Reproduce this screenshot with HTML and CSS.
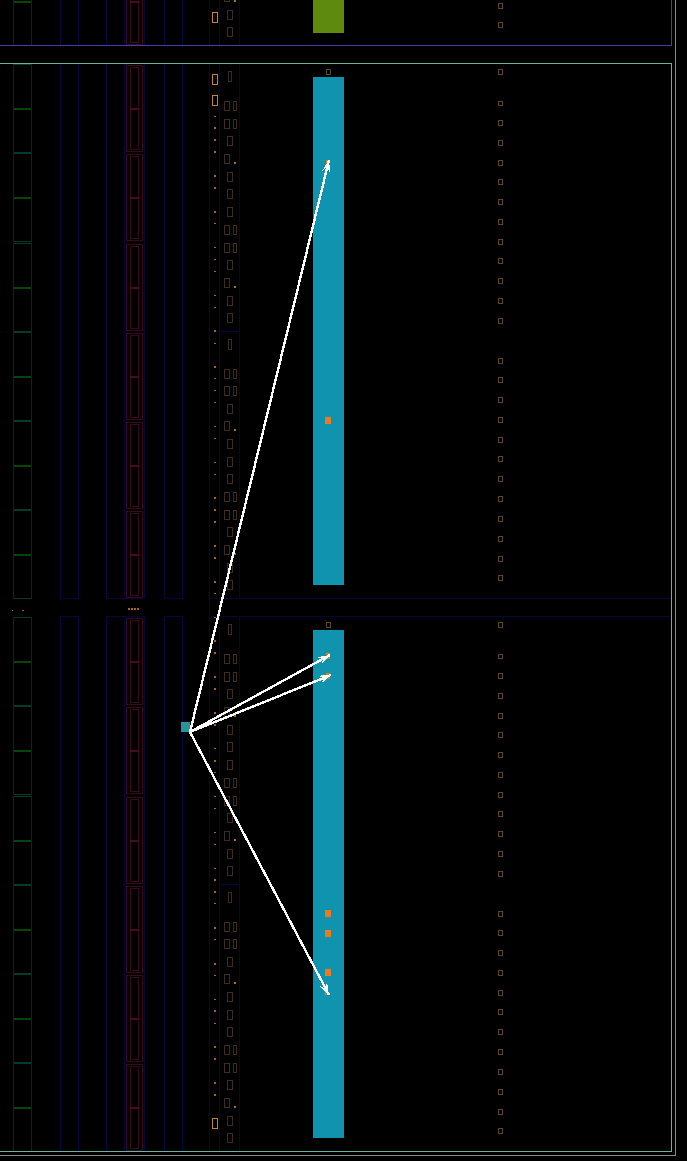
FILE: index.html
```html
<!DOCTYPE html>
<html lang="en">
<head>
<meta charset="utf-8">
<title>Floorplan</title>
<link rel="stylesheet" href="styles.css">
</head>
<body>
<svg class="plan" width="687" height="1161" viewBox="0 0 687 1161" xmlns="http://www.w3.org/2000/svg">
  <defs>
    <marker id="head" markerUnits="userSpaceOnUse" markerWidth="14" markerHeight="11" refX="13" refY="5.5" orient="auto">
      <path class="arrow-head" d="M13 5.5 L0 1 L6 5.5 L0 10 Z"/>
    </marker>

    <g id="pair">
      <rect class="green" x="13.5" y="0.5" width="18" height="88"/>
      <rect class="green-bar" x="14" y="44" width="17" height="2"/>
      <rect class="green-edge" x="14" y="88" width="17" height="1"/>
      <rect class="green-edge" x="14" y="0" width="17" height="1"/>
      <rect class="red" x="126.5" y="1.5" width="16" height="86"/>
      <rect class="red" x="130.5" y="3.5" width="8" height="82"/>
      <rect class="red-bar" x="130" y="44" width="9" height="2"/>
    </g>

    <rect id="sq" class="pad" x="498.5" y="0.5" width="4" height="5"/>
    <rect id="sq-short" class="pad" x="498.5" y="0.5" width="4" height="4"/>
    <rect id="dot" class="mark" x="214" y="0" width="2" height="2"/>
    <rect id="dash" class="mark" x="214" y="0" width="2" height="1"/>
    <rect id="big" class="big" x="212.5" y="0.5" width="5" height="10"/>

    <g id="c-pair">
      <rect class="chip" x="224.5" y="0.5" width="5" height="9"/>
      <rect class="chip" x="233.5" y="0.5" width="3" height="9"/>
    </g>
    <rect id="c-one" class="chip" x="227.5" y="0.5" width="5" height="9"/>
    <g id="c-left">
      <rect class="chip" x="224.5" y="0.5" width="5" height="9"/>
      <rect class="tick" x="234" y="8" width="2" height="2"/>
    </g>
    <rect id="c-narrow" class="chip" x="228.5" y="0.5" width="3" height="10"/>

    <g id="section">
      <rect class="col" x="60.5" y="63.5" width="18" height="535"/>
      <rect class="col" x="106.5" y="63.5" width="18" height="535"/>
      <rect class="col" x="124.5" y="63.5" width="20" height="535"/>
      <rect class="col" x="164.5" y="63.5" width="18" height="535"/>
      <rect class="col" x="209.5" y="63.5" width="10" height="535"/>
      <rect class="col" x="219.5" y="63.5" width="20" height="535"/>
      <rect class="col" x="219.5" y="331.5" width="20" height="267"/>

      <use href="#pair" y="64"/>
      <use href="#pair" y="153"/>
      <use href="#pair" y="243"/>
      <use href="#pair" y="332"/>
      <use href="#pair" y="421"/>
      <use href="#pair" y="510"/>

      <use href="#c-narrow" y="71"/>
      <use href="#c-pair" y="101"/>
      <use href="#c-pair" y="119"/>
      <use href="#c-one" y="136"/>
      <use href="#c-left" y="154"/>
      <use href="#c-one" y="172"/>
      <use href="#c-one" y="189"/>
      <use href="#c-one" y="207"/>
      <use href="#c-pair" y="225"/>
      <use href="#c-pair" y="243"/>
      <use href="#c-one" y="260"/>
      <use href="#c-left" y="278"/>
      <use href="#c-one" y="296"/>
      <use href="#c-one" y="313"/>
      <use href="#c-narrow" y="339"/>
      <use href="#c-pair" y="369"/>
      <use href="#c-pair" y="386"/>
      <use href="#c-one" y="404"/>
      <use href="#c-left" y="421"/>
      <use href="#c-one" y="439"/>
      <use href="#c-one" y="457"/>
      <use href="#c-one" y="474"/>
      <use href="#c-pair" y="492"/>
      <use href="#c-pair" y="510"/>
      <use href="#c-one" y="527"/>
      <use href="#c-left" y="545"/>
      <use href="#c-one" y="563"/>
      <use href="#c-one" y="580"/>

      <rect class="pad" x="326.5" y="69.5" width="4" height="5"/>
      <use href="#sq" y="69"/>
      <use href="#sq-short" y="101"/>
      <use href="#sq" y="120"/>
      <use href="#sq" y="140"/>
      <use href="#sq" y="160"/>
      <use href="#sq" y="179"/>
      <use href="#sq" y="199"/>
      <use href="#sq" y="219"/>
      <use href="#sq" y="239"/>
      <use href="#sq" y="258"/>
      <use href="#sq" y="278"/>
      <use href="#sq" y="298"/>
      <use href="#sq" y="318"/>
      <use href="#sq" y="358"/>
      <use href="#sq" y="377"/>
      <use href="#sq" y="397"/>
      <use href="#sq" y="417"/>
      <use href="#sq" y="437"/>
      <use href="#sq" y="456"/>
      <use href="#sq" y="476"/>
      <use href="#sq" y="496"/>
      <use href="#sq" y="516"/>
      <use href="#sq" y="536"/>
      <use href="#sq" y="556"/>
      <use href="#sq" y="575"/>
    </g>
  </defs>

  <!-- repeated die sections -->
  <use href="#section" y="-553"/>
  <use href="#section"/>
  <use href="#section" y="553"/>

  <!-- routing channel between sections -->
  <rect class="col" x="209.5" y="598.5" width="10" height="18"/>
  <rect class="col" x="219.5" y="598.5" width="452" height="18"/>

  <!-- fine marks in the pad column -->
  <use href="#big" y="12"/>
  <use href="#big" y="74"/>
  <use href="#big" y="95"/>
  <use href="#big" y="1118"/>
  <use href="#dash" y="116"/>
  <use href="#dot" y="127"/>
  <use href="#dot" y="139"/>
  <use href="#dot" y="151"/>
  <use href="#dot" y="175"/>
  <use href="#dot" y="187"/>
  <use href="#dot" y="211"/>
  <use href="#dash" y="223"/>
  <use href="#dash" y="247"/>
  <use href="#dash" y="259"/>
  <use href="#dash" y="271"/>
  <use href="#dash" y="295"/>
  <use href="#dash" y="307"/>
  <use href="#dot" y="330"/>
  <use href="#dash" y="343"/>
  <use href="#dot" y="366"/>
  <use href="#dash" y="378"/>
  <use href="#dash" y="390"/>
  <use href="#dash" y="402"/>
  <use href="#dash" y="426"/>
  <use href="#dash" y="438"/>
  <use href="#dash" y="462"/>
  <use href="#dash" y="474"/>
  <use href="#dot" y="497"/>
  <use href="#dot" y="509"/>
  <use href="#dot" y="521"/>
  <use href="#dot" y="545"/>
  <use href="#dot" y="557"/>
  <use href="#dot" y="581"/>
  <use href="#dash" y="593"/>
  <use href="#dash" y="617"/>
  <use href="#dot" y="640"/>
  <use href="#dot" y="652"/>
  <use href="#dot" y="676"/>
  <use href="#dot" y="688"/>
  <use href="#dot" y="712"/>
  <use href="#dot" y="724"/>
  <use href="#dash" y="748"/>
  <use href="#dot" y="760"/>
  <use href="#dash" y="772"/>
  <use href="#dash" y="796"/>
  <use href="#dash" y="808"/>
  <use href="#dash" y="832"/>
  <use href="#dash" y="844"/>
  <use href="#dash" y="868"/>
  <use href="#dot" y="879"/>
  <use href="#dot" y="891"/>
  <use href="#dash" y="903"/>
  <use href="#dot" y="927"/>
  <use href="#dash" y="939"/>
  <use href="#dot" y="963"/>
  <use href="#dash" y="975"/>
  <use href="#dash" y="999"/>
  <use href="#dot" y="1010"/>
  <use href="#dash" y="1023"/>
  <use href="#dot" y="1046"/>
  <use href="#dot" y="1058"/>
  <use href="#dot" y="1082"/>
  <use href="#dot" y="1094"/>

  <rect class="mark" x="12" y="610" width="1" height="1"/>
  <rect class="mark" x="22" y="610" width="2" height="1"/>
  <rect class="mark" x="128" y="608" width="2" height="2"/>
  <rect class="mark" x="131" y="608" width="2" height="2"/>
  <rect class="mark" x="134" y="608" width="2" height="2"/>
  <rect class="mark" x="137" y="608" width="2" height="2"/>

  <!-- memory blocks -->
  <rect class="block-green" x="313" y="0" width="31" height="33"/>
  <rect class="block-blue" x="313" y="77" width="31" height="508"/>
  <rect class="block-blue" x="313" y="630" width="31" height="508"/>

  <rect class="hit" x="326" y="160" width="3" height="4"/>
  <rect class="hit" x="325" y="417" width="6" height="7"/>
  <rect class="hit" x="326" y="653" width="4" height="6"/>
  <rect class="hit" x="326" y="673" width="4" height="6"/>
  <rect class="hit" x="325" y="910" width="6" height="7"/>
  <rect class="hit" x="325" y="930" width="6" height="7"/>
  <rect class="hit" x="325" y="969" width="6" height="7"/>
  <rect class="hit" x="325" y="991" width="3" height="4"/>

  <!-- frames -->
  <path class="frame-purple" d="M0 45.5 H671.5 V0"/>
  <path class="frame-teal" d="M0 63.5 H671.5 V1151.5 H0"/>
  <path class="frame-gray" d="M675.5 0 V1155.5 H0"/>

  <!-- source and flight lines -->
  <rect class="source" x="181" y="722" width="9" height="10"/>
  <line class="arrow" x1="190" y1="732" x2="329" y2="160" marker-end="url(#head)"/>
  <line class="arrow" x1="190" y1="732" x2="330" y2="655" marker-end="url(#head)"/>
  <line class="arrow" x1="190" y1="732" x2="331" y2="675" marker-end="url(#head)"/>
  <line class="arrow" x1="190" y1="732" x2="329" y2="995" marker-end="url(#head)"/>
</svg>
</body>
</html>
```

FILE: styles.css
```css
html, body {
  margin: 0;
  padding: 0;
  background: #000;
}

.plan {
  display: block;
  background: #000;
}

.plan rect {
  shape-rendering: crispEdges;
}

.col {
  fill: none;
  stroke: #06063f;
  stroke-width: 1;
}

.green {
  fill: none;
  stroke: #071c58;
  stroke-width: 1;
}

.green-bar {
  fill: #064408;
}

.green-edge {
  fill: #063a2e;
}

.red {
  fill: none;
  stroke: #3a081c;
  stroke-width: 1;
}

.red-bar {
  fill: #4e0824;
}

.chip {
  fill: none;
  stroke: #3f2d14;
  stroke-width: 1;
}

.tick {
  fill: #a8701e;
}

.pad {
  fill: none;
  stroke: #5c4822;
  stroke-width: 1;
}

.mark {
  fill: #a8641a;
}

.big {
  fill: none;
  stroke: #c48630;
  stroke-width: 1;
}

.block-green {
  fill: #5f8a10;
}

.block-blue {
  fill: #1093af;
}

.hit {
  fill: #ee7a20;
}

.frame-purple {
  fill: none;
  stroke: #4b3aa8;
  stroke-width: 1;
  shape-rendering: crispEdges;
}

.frame-teal {
  fill: none;
  stroke: #5fb8a0;
  stroke-width: 1;
  shape-rendering: crispEdges;
}

.frame-gray {
  fill: none;
  stroke: #8a8a8a;
  stroke-width: 1;
  shape-rendering: crispEdges;
}

.source {
  fill: #2a939c;
}

.arrow {
  stroke: #fff;
  stroke-width: 2.4;
  shape-rendering: crispEdges;
}

.arrow-head {
  fill: #fff;
  shape-rendering: crispEdges;
}
```
